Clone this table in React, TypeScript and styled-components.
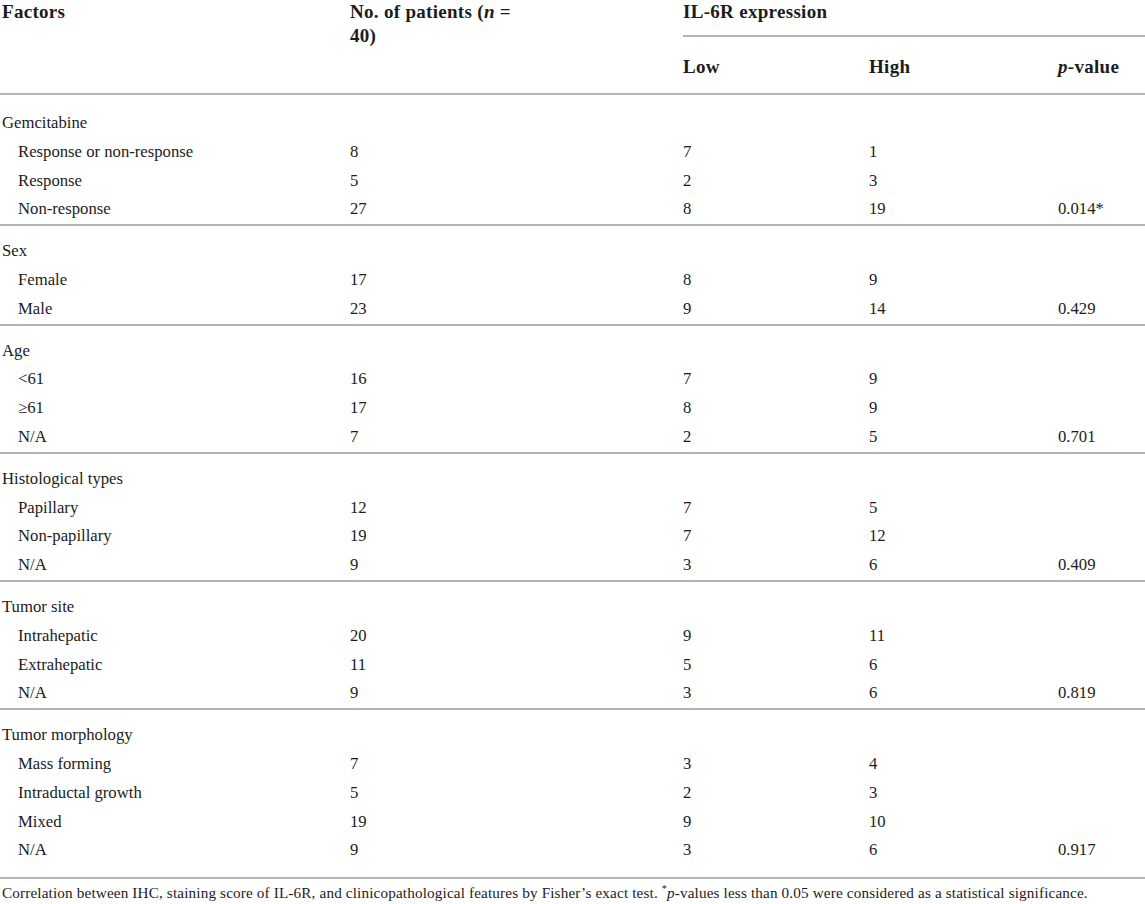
import styled, {createGlobalStyle} from "styled-components";

const GlobalStyle = createGlobalStyle`
  html, body {
    margin: 0;
    padding: 0;
    background: #fff;
  }
  body {
    font-family: "Liberation Serif", "Times New Roman", serif;
    color: #1c1c1c;
  }
`

type SubRow = {
    label: string
    total: string
    low: string
    high: string
    p?: string
}

type Group = {
    title: string
    rows: SubRow[]
}

const groups: Group[] = [
    {
        title: "Gemcitabine",
        rows: [
            {label: "Response or non-response", total: "8", low: "7", high: "1"},
            {label: "Response", total: "5", low: "2", high: "3"},
            {label: "Non-response", total: "27", low: "8", high: "19", p: "0.014*"},
        ],
    },
    {
        title: "Sex",
        rows: [
            {label: "Female", total: "17", low: "8", high: "9"},
            {label: "Male", total: "23", low: "9", high: "14", p: "0.429"},
        ],
    },
    {
        title: "Age",
        rows: [
            {label: "<61", total: "16", low: "7", high: "9"},
            {label: "≥61", total: "17", low: "8", high: "9"},
            {label: "N/A", total: "7", low: "2", high: "5", p: "0.701"},
        ],
    },
    {
        title: "Histological types",
        rows: [
            {label: "Papillary", total: "12", low: "7", high: "5"},
            {label: "Non-papillary", total: "19", low: "7", high: "12"},
            {label: "N/A", total: "9", low: "3", high: "6", p: "0.409"},
        ],
    },
    {
        title: "Tumor site",
        rows: [
            {label: "Intrahepatic", total: "20", low: "9", high: "11"},
            {label: "Extrahepatic", total: "11", low: "5", high: "6"},
            {label: "N/A", total: "9", low: "3", high: "6", p: "0.819"},
        ],
    },
    {
        title: "Tumor morphology",
        rows: [
            {label: "Mass forming", total: "7", low: "3", high: "4"},
            {label: "Intraductal growth", total: "5", low: "2", high: "3"},
            {label: "Mixed", total: "19", low: "9", high: "10"},
            {label: "N/A", total: "9", low: "3", high: "6", p: "0.917"},
        ],
    },
]

export default function App() {
    return (
        <>
            <GlobalStyle/>
            <Wrapper>
                <Table>
                    <colgroup>
                        <col style={{width: 350}}/>
                        <col style={{width: 333}}/>
                        <col style={{width: 186}}/>
                        <col style={{width: 189}}/>
                        <col/>
                    </colgroup>
                    <thead>
                    <tr>
                        <HeadCell rowSpan={2} $first>Factors</HeadCell>
                        <HeadCell rowSpan={2}>No. of patients (<i>n</i> =<br/>40)</HeadCell>
                        <GroupHead colSpan={3}>IL-6R expression</GroupHead>
                    </tr>
                    <tr>
                        <SubHead>Low</SubHead>
                        <SubHead>High</SubHead>
                        <SubHead><i>p</i>-value</SubHead>
                    </tr>
                    </thead>
                    {groups.map((g, gi) => (
                        <GroupBody key={g.title} $first={gi === 0} $last={gi === groups.length - 1}>
                        <tr>
                            <Cell $level={0}>{g.title}</Cell>
                            <Cell/>
                            <Cell/>
                            <Cell/>
                            <Cell/>
                        </tr>
                        {g.rows.map((r, ri) => (
                            <tr key={ri}>
                                <Cell $level={1}>{r.label}</Cell>
                                <Cell>{r.total}</Cell>
                                <Cell>{r.low}</Cell>
                                <Cell>{r.high}</Cell>
                                <Cell>{r.p}</Cell>
                            </tr>
                        ))}
                        </GroupBody>
                    ))}
                </Table>
                <Footnote>
                    Correlation between IHC, staining score of IL-6R, and clinicopathological features by Fisher’s
                    exact test. <sup>*</sup><i>p</i>-values less than 0.05 were considered as a statistical significance.
                </Footnote>
            </Wrapper>
        </>
    )
}

const Wrapper = styled.div`
  width: 1145px;
`

const Table = styled.table`
  width: 1145px;
  border-collapse: collapse;
  table-layout: fixed;
`

const HeadCell = styled.th<{ $first?: boolean }>`
  text-align: left;
  vertical-align: top;
  font-size: 19px;
  font-weight: 700;
  letter-spacing: 0.3px;
  line-height: 24px;
  padding: 0 0 0 ${p => (p.$first ? "2px" : "0")};
  border-bottom: 2px solid #b4b4b4;

  i {
    font-style: italic;
  }
`

const GroupHead = styled.th`
  text-align: left;
  font-size: 19px;
  font-weight: 700;
  letter-spacing: 0.3px;
  line-height: 24px;
  height: 24px;
  padding: 0 0 11px 0;
  border-bottom: 2px solid #b4b4b4;
`

const SubHead = styled.th`
  text-align: left;
  font-size: 19px;
  font-weight: 700;
  letter-spacing: 0.3px;
  line-height: 24px;
  padding: 18px 0 14px 0;
  border-bottom: 2px solid #b4b4b4;
`

const GroupBody = styled.tbody<{ $first?: boolean; $last?: boolean }>`
  tr:first-child td {
    padding-top: ${p => (p.$first ? "14px" : "11px")};
  }

  tr:last-child td {
    border-bottom: 2px solid #b4b4b4;
    padding-bottom: ${p => (p.$last ? "12px" : "0")};
  }
`

const Cell = styled.td<{ $level?: number }>`
  font-size: 16.7px;
  line-height: 28.8px;
  padding: 0 0 0 ${p => (p.$level === 1 ? "18px" : p.$level === 0 ? "2px" : "0")};
  white-space: nowrap;
  vertical-align: middle;
`

const Footnote = styled.p`
  margin: 0;
  padding: 6px 0 0 2px;
  font-size: 15.2px;
  line-height: 16px;
  letter-spacing: 0.15px;
  white-space: nowrap;

  sup {
    font-size: 10px;
    line-height: 0;
  }
`
